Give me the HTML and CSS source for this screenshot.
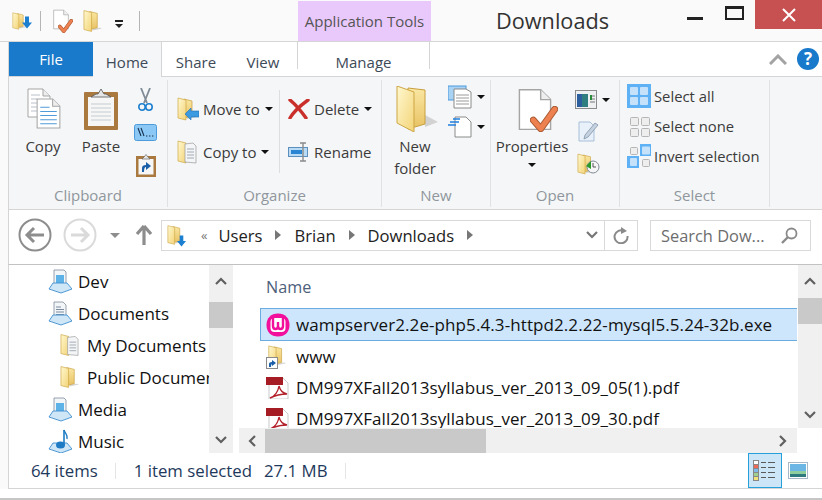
FILE: index.html
```html
<!DOCTYPE html>
<html lang="en">
<head>
  <meta charset="UTF-8">
  <meta name="viewport" content="width=device-width, initial-scale=1">
  <title>Downloads</title>
  <link rel="stylesheet" href="styles.css">
</head>
<body>

  <svg class="sprites" aria-hidden="true">
    <defs>
      <linearGradient id="fold" x1="0" y1="0" x2="1" y2="1">
        <stop offset="0" stop-color="#fff8cf"/>
        <stop offset="1" stop-color="#f3d478"/>
      </linearGradient>
      <linearGradient id="foldBack" x1="0" y1="0" x2="0" y2="1">
        <stop offset="0" stop-color="#fae7a2"/>
        <stop offset="1" stop-color="#e8c264"/>
      </linearGradient>
    </defs>
    <symbol id="folder" viewBox="0 0 20 24">
      <path d="M10 20 L18 19 L20 20 L10 22 Z" fill="#bbb" opacity=".6"/>
      <path d="M7 2 L15 4 V19 L7 21 Z" fill="url(#foldBack)" stroke="#c99f3e" stroke-width=".7"/>
      <path d="M1 1 L9 3 V23 L1 21 Z" fill="url(#fold)" stroke="#cda644" stroke-width=".7"/>
    </symbol>
    <symbol id="docfolder" viewBox="0 0 20 24">
      <path d="M1 1 L9 3 V23 L1 21 Z" fill="url(#fold)" stroke="#cda644" stroke-width=".7"/>
      <path d="M8 4 L16 3 L19 6 V23 L8 22 Z" fill="#f4f5f6" stroke="#9a9a9a" stroke-width=".7"/>
      <path d="M10 9 H17 M10 12 H17 M10 15 H17 M10 18 H17" stroke="#8c97a3" stroke-width=".8"/>
    </symbol>
    <symbol id="sheet" viewBox="0 0 24 30">
      <path d="M1 1 H16 L23 8 V29 H1 Z" fill="#fff" stroke="#a5a5a5"/>
      <path d="M16 1 V8 H23" fill="#eee" stroke="#a5a5a5"/>
    </symbol>
    <symbol id="check" viewBox="0 0 26 24">
      <path d="M3 13 L10 21 L23 3" fill="none" stroke="#a95a34" stroke-width="6.4" stroke-linecap="round" stroke-linejoin="round"/>
      <path d="M3 13 L10 21 L23 3" fill="none" stroke="#ee8150" stroke-width="4.6" stroke-linecap="round" stroke-linejoin="round"/>
    </symbol>
    <symbol id="library" viewBox="0 0 24 25">
      <path d="M6 1 H16 L18 3 V16 H6 Z" fill="#f3f6f9" stroke="#7d8b9b" stroke-width=".8"/>
      <rect x="8" y="6" width="8" height="8" fill="#5db3e8"/>
      <path d="M5 14 H19 L24 20 L13 24 L1 20 Z" fill="#cfe6f7" stroke="#3d8fd0" stroke-width=".9"/>
    </symbol>
    <symbol id="libdocs" viewBox="0 0 24 25">
      <path d="M6 1 H15 L18 4 V16 H6 Z" fill="#f3f6f9" stroke="#7d8b9b" stroke-width=".8"/>
      <path d="M8 6 H13 M8 8.500 H16 M8 11 H16 M8 13.500 H16" stroke="#6d7f92" stroke-width=".9"/>
      <path d="M5 14 H19 L24 20 L13 24 L1 20 Z" fill="#cfe6f7" stroke="#3d8fd0" stroke-width=".9"/>
    </symbol>
    <symbol id="libmusic" viewBox="0 0 24 25">
      <path d="M5 14 H19 L24 20 L13 24 L1 20 Z" fill="#cfe6f7" stroke="#3d8fd0" stroke-width=".9"/>
      <path d="M16 1 V16" stroke="#1f7cc4" stroke-width="1.600"/>
      <path d="M16 1 C17 5 20 5 19 10" fill="none" stroke="#1f7cc4" stroke-width="1.400"/>
      <ellipse cx="12.500" cy="16" rx="4.500" ry="3.600" fill="#1f7cc4"/>
    </symbol>
    <symbol id="pdf" viewBox="0 0 23 22">
      <path d="M3 1 H17 L22 6 V22 H3 Z" fill="#fff" stroke="#c9c9c9"/>
      <rect x="0" y="0" width="17" height="8" fill="#a51c24"/>
      <path d="M13 9 C12 15 9 19 4 21 C10 18 15 17 21 17 C16 16 14 13 13 9 Z" fill="none" stroke="#b3202a" stroke-width="1.4"/>
    </symbol>
  </svg>

  <div class="window">
    <div class="titlebar">
      <div class="quick">
        <svg class="q-folder"><use href="#folder"/></svg>
        <svg class="q-arrow" viewBox="0 0 10 12"><path d="M3 0 H7 V6 H10 L5 12 L0 6 H3 Z" fill="#1c7fd0"/></svg>
        <span class="q-sep"></span>
        <span class="q-doc">
          <svg class="q-sheet"><use href="#sheet"/></svg>
          <svg class="q-check"><use href="#check"/></svg>
        </span>
        <svg class="q-folder2"><use href="#folder"/></svg>
        <span class="q-more"></span>
        <span class="q-sep q-sep2"></span>
      </div>
      <div class="context">Application Tools</div>
      <div class="title">Downloads</div>
      <div class="win-btns">
        <span class="btn-min"></span>
        <span class="btn-max"></span>
        <span class="btn-close">
          <svg width="14" height="14" viewBox="0 0 14 14"><path d="M1 1 L13 13 M13 1 L1 13" stroke="#fff" stroke-width="2"/></svg>
        </span>
      </div>
    </div>

    <div class="tabs">
      <div class="tab-file">File</div>
      <div class="tab tab-home">Home</div>
      <div class="tab tab-share">Share</div>
      <div class="tab tab-view">View</div>
      <div class="tab tab-manage">Manage</div>
      <div class="tab-right">
        <svg class="collapse" width="18" height="11" viewBox="0 0 18 11"><path d="M1 10 L9 2 L17 10" fill="none" stroke="#a3a3a3" stroke-width="3"/></svg>
        <span class="help">?</span>
      </div>
    </div>

    <div class="ribbon">
      <div class="group g-clip">
        <div class="group-body">
          <div class="big big-copy">
            <span class="ico-copy">
              <svg class="copy-a" viewBox="0 0 24 30">
                <path d="M1 1 H16 L23 8 V29 H1 Z" fill="#fff" stroke="#a5a5a5"/>
                <path d="M16 1 V8 H23" fill="#eee" stroke="#a5a5a5"/>
                <path d="M4 7 H13 M4 11 H10 M4 15 H10 M4 19 H10 M4 23 H10" stroke="#b9c0c8"/>
              </svg>
              <svg class="copy-b" viewBox="0 0 24 30">
                <path d="M1 1 H16 L23 8 V29 H1 Z" fill="#fff" stroke="#a5a5a5"/>
                <path d="M16 1 V8 H23" fill="#eee" stroke="#a5a5a5"/>
                <path d="M4 9 H13 M4 13 H20 M4 17 H20 M4 21 H20 M4 25 H20" stroke="#4f9bd9" stroke-width="1"/>
              </svg>
            </span>
            <span class="big-label">Copy</span>
          </div>
          <div class="big big-paste">
            <svg width="36" height="42" viewBox="0 0 36 42">
              <rect x="1" y="4" width="34" height="38" fill="#a9793f" rx="1"/>
              <rect x="5" y="9" width="26" height="29" fill="#f6f6f6"/>
              <path d="M8 16 H28 M8 20 H28 M8 24 H28 M8 28 H28 M8 32 H28" stroke="#c6ccd2"/>
              <path d="M8 9 L13 6 H15 L18 1 L21 6 H23 L28 9 Z" fill="#e6e6e6" stroke="#555" stroke-width=".8"/>
            </svg>
            <span class="big-label">Paste</span>
          </div>
          <div class="small-col clip-small">
            <svg class="ico-cut" width="15" height="24" viewBox="0 0 15 24">
              <path d="M3 0 L9 15 M12 0 L6 15" stroke="#7f8b97" stroke-width="1.8"/>
              <circle cx="4" cy="19" r="3.2" fill="none" stroke="#1f80cf" stroke-width="1.6"/>
              <circle cx="11" cy="19" r="3.2" fill="none" stroke="#1f80cf" stroke-width="1.6"/>
            </svg>
            <svg class="ico-path" width="23" height="17" viewBox="0 0 23 17">
              <rect x=".5" y=".5" width="22" height="16" rx="2" fill="#8cc8f5" stroke="#4c9ada"/>
              <path d="M4 4 L7 12 M7 4 L10 12" stroke="#16324f" stroke-width="1.1"/>
              <path d="M12 12 H13.4 M15 12 H16.4 M18 12 H19.4" stroke="#16324f" stroke-width="1.2"/>
            </svg>
            <svg class="ico-shortcut" width="20" height="23" viewBox="0 0 20 23">
              <rect x="0" y="2" width="20" height="21" fill="#a9793f"/>
              <rect x="2.500" y="5" width="15" height="15.500" fill="#f6f6f6"/>
              <path d="M6 5 L8 3 L10 0.500 L12 3 L14 5 Z" fill="#e6e6e6" stroke="#555" stroke-width=".6"/>
              <path d="M6 18 V14 Q6 11 10 11 V8 L15 12 L10 16 V13 Q8 13 8 18 Z" fill="#1b5fa8"/>
            </svg>
          </div>
        </div>
        <div class="group-label">Clipboard</div>
      </div>

      <div class="group g-org">
        <div class="group-body org-body">
          <div class="org-col org-col1">
            <div class="org-row">
              <span class="ico-move">
                <svg class="org-folder"><use href="#folder"/></svg>
                <svg class="org-over" viewBox="0 0 14 12"><path d="M0 6 L6 0 V3 H14 V9 H6 V12 Z" fill="#3c9be0" stroke="#1e6fb5" stroke-width=".6"/></svg>
              </span>
              <span class="org-text">Move to</span><span class="caret"></span>
            </div>
            <div class="org-row">
              <span class="ico-move">
                <svg class="org-folder"><use href="#docfolder"/></svg>
              </span>
              <span class="org-text">Copy to</span><span class="caret"></span>
            </div>
          </div>
          <span class="org-sep"></span>
          <div class="org-col">
            <div class="org-row">
              <svg class="ico-del" width="22" height="20" viewBox="0 0 22 20">
                <path d="M2 1 C8 6 13 12 18 19 M20 1 C13 6 6 12 2 19" fill="none" stroke="#c9302c" stroke-width="3.400" stroke-linecap="round"/>
              </svg>
              <span class="org-text">Delete</span><span class="caret"></span>
            </div>
            <div class="org-row">
              <svg class="ico-ren" width="22" height="20" viewBox="0 0 22 20">
                <rect x=".5" y="5.500" width="19" height="9" fill="#b9dbf5" stroke="#5b8fbe"/>
                <rect x="3" y="8" width="11" height="4" fill="#2a86d2"/>
                <path d="M12 1 H18 M15 1 V19 M12 19 H18" stroke="#8b8b8b" stroke-width="1.400"/>
              </svg>
              <span class="org-text">Rename</span>
            </div>
          </div>
        </div>
        <div class="group-label">Organize</div>
      </div>

      <div class="group g-new">
        <div class="group-body">
          <div class="big big-new">
            <svg width="42" height="46" viewBox="0 0 42 46" class="ico-newfolder">
              <path d="M29 29 L42 36 L29 41 Z" fill="#c9c9c9" opacity=".8"/>
              <path d="M12 2 L29 4 V38 L12 43 Z" fill="url(#foldBack)" stroke="#c99f3e"/>
              <path d="M1 0 L18 6 V46 L1 37 Z" fill="url(#fold)" stroke="#cda644"/>
            </svg>
            <span class="big-label">New<br>folder</span>
          </div>
          <div class="small-col new-small">
            <span class="new-row">
              <svg width="24" height="24" viewBox="0 0 24 24">
                <rect x="0" y="1" width="18" height="14" fill="#a8d3f5" stroke="#4c9ada"/>
                <path d="M6 4 H18 L23 7 V23 H6 Z" fill="#fff" stroke="#8a8a8a"/>
                <path d="M8 10 H21 M8 13 H21 M8 16 H21 M8 19 H21" stroke="#9a9a9a"/>
              </svg>
              <span class="caret"></span>
            </span>
            <span class="new-row">
              <svg width="24" height="22" viewBox="0 0 24 22">
                <path d="M7 1 H18 L23 6 V21 H7 Z" fill="#fff" stroke="#8a8a8a"/>
                <path d="M5 3 H12 M2 6 H11 M0 9 H8" stroke="#1f80e0" stroke-width="1.300"/>
              </svg>
              <span class="caret"></span>
            </span>
          </div>
        </div>
        <div class="group-label">New</div>
      </div>

      <div class="group g-open">
        <div class="group-body">
          <div class="big big-prop">
            <span class="ico-prop">
              <svg class="prop-sheet"><use href="#sheet"/></svg>
              <svg class="prop-check"><use href="#check"/></svg>
            </span>
            <span class="big-label">Properties</span>
            <span class="caret caret-below"></span>
          </div>
          <div class="small-col open-small">
            <span class="new-row">
              <svg width="22" height="20" viewBox="0 0 22 20">
                <rect x=".5" y=".5" width="21" height="18" fill="#eef0f2" stroke="#8c8c8c"/>
                <rect x="2" y="4" width="11" height="13" fill="#2f7f80"/>
                <rect x="2" y="4" width="5" height="13" fill="#2d5f9e"/>
                <path d="M15 6 H20 M15 9 H20 M15 12 H20" stroke="#777"/>
                <rect x="15" y="5" width="2" height="5" fill="#2b8a3a"/>
              </svg>
              <span class="caret"></span>
            </span>
            <svg class="ico-edit" width="21" height="21" viewBox="0 0 21 21">
              <path d="M1 1 H12 L16 5 V20 H1 Z" fill="#e8f0f9" stroke="#a9bfd8"/>
              <path d="M7 14 L17 2 L20 4 L10 16 L6 18 Z" fill="#c6d2df" stroke="#7f93a8" stroke-width=".8"/>
            </svg>
            <span class="ico-history">
              <svg class="hist-folder"><use href="#folder"/></svg>
              <svg class="hist-clock" width="14" height="14" viewBox="0 0 14 14">
                <circle cx="7" cy="7" r="6" fill="#f5f5f5" stroke="#7f8b97"/>
                <path d="M7 3 V7 H10" fill="none" stroke="#555"/>
                <path d="M0 6 L5 1 L5 9 Z" fill="#2b9a2b"/>
              </svg>
            </span>
          </div>
        </div>
        <div class="group-label">Open</div>
      </div>

      <div class="group g-select">
        <div class="group-body sel-body">
          <div class="sel-row">
            <svg width="24" height="24" viewBox="0 0 24 24">
              <rect width="24" height="24" fill="#5fb1f5"/>
              <rect x="3" y="3" width="8" height="8" rx="1" fill="#c6e2fa"/><rect x="13" y="3" width="8" height="8" rx="1" fill="#c6e2fa"/>
              <rect x="3" y="13" width="8" height="8" rx="1" fill="#c6e2fa"/><rect x="13" y="13" width="8" height="8" rx="1" fill="#c6e2fa"/>
            </svg>
            <span>Select all</span>
          </div>
          <div class="sel-row">
            <svg width="24" height="24" viewBox="0 0 24 24">
              <rect x="3.500" y="3.500" width="8" height="8" rx="1" fill="#eee" stroke="#b5b5b5"/><rect x="14.500" y="3.500" width="8" height="8" rx="1" fill="#eee" stroke="#b5b5b5"/>
              <rect x="3.500" y="14.500" width="8" height="8" rx="1" fill="#eee" stroke="#b5b5b5"/><rect x="14.500" y="14.500" width="8" height="8" rx="1" fill="#eee" stroke="#b5b5b5"/>
            </svg>
            <span>Select none</span>
          </div>
          <div class="sel-row">
            <svg width="24" height="24" viewBox="0 0 24 24">
              <rect x="13" y="0" width="11" height="12" fill="#5fb1f5"/><rect x="0" y="12" width="12" height="12" fill="#5fb1f5"/>
              <rect x="3.500" y="3.500" width="7" height="7" rx="1" fill="#eee" stroke="#b5b5b5"/><rect x="15" y="2.500" width="8" height="8" rx="1" fill="#c6e2fa"/>
              <rect x="3" y="14" width="7" height="8" rx="1" fill="#c6e2fa"/><rect x="15.500" y="15.500" width="7" height="7" rx="1" fill="#eee" stroke="#b5b5b5"/>
            </svg>
            <span>Invert selection</span>
          </div>
        </div>
        <div class="group-label">Select</div>
      </div>
    </div>

    <div class="addressbar">
      <svg class="nav-back" width="34" height="34" viewBox="0 0 34 34">
        <circle cx="17" cy="17" r="15.500" fill="#fff" stroke="#8d8d8d" stroke-width="2"/>
        <path d="M26 17 H10 M16 10 L9 17 L16 24" fill="none" stroke="#8d8d8d" stroke-width="3"/>
      </svg>
      <svg class="nav-fwd" width="34" height="34" viewBox="0 0 34 34">
        <circle cx="17" cy="17" r="15.500" fill="#fff" stroke="#dadada" stroke-width="2"/>
        <path d="M8 17 H24 M18 10 L25 17 L18 24" fill="none" stroke="#dadada" stroke-width="3"/>
      </svg>
      <span class="nav-down"></span>
      <svg class="nav-up" width="16" height="20" viewBox="0 0 16 20"><path d="M8 1 L1 9 M8 1 L15 9 M8 1 V20" fill="none" stroke="#8d8d8d" stroke-width="3.200"/></svg>
      <div class="crumbs">
        <span class="crumb-ico">
          <svg class="crumb-folder"><use href="#folder"/></svg>
          <svg class="crumb-arrow" viewBox="0 0 10 12"><path d="M3 0 H7 V6 H10 L5 12 L0 6 H3 Z" fill="#1c7fd0"/></svg>
        </span>
        <span class="crumb-more">«</span>
        <span class="crumb">Users</span><span class="crumb-sep"></span>
        <span class="crumb">Brian</span><span class="crumb-sep"></span>
        <span class="crumb">Downloads</span><span class="crumb-sep"></span>
        <svg class="crumb-drop" width="12" height="8" viewBox="0 0 12 8"><path d="M1 1 L6 6 L11 1" fill="none" stroke="#777" stroke-width="2.200"/></svg>
        <span class="crumb-refresh">
          <svg width="16" height="17" viewBox="0 0 16 17"><path d="M11 4 A6.500 6.500 0 1 0 14.500 9" fill="none" stroke="#8a8a8a" stroke-width="2"/><path d="M8 0 L14 4 L8 7 Z" fill="#8a8a8a"/></svg>
        </span>
      </div>
      <div class="search">
        <span>Search Dow...</span>
        <svg width="17" height="17" viewBox="0 0 17 17"><circle cx="10.500" cy="6.500" r="5" fill="none" stroke="#8a8a8a" stroke-width="1.800"/><path d="M7 10 L1 16" stroke="#8a8a8a" stroke-width="2.400"/></svg>
      </div>
    </div>

    <div class="panes">
      <div class="navpane">
        <div class="nav-row"><svg class="nav-ico"><use href="#library"/></svg><span>Dev</span></div>
        <div class="nav-row"><svg class="nav-ico"><use href="#libdocs"/></svg><span>Documents</span></div>
        <div class="nav-row nav-sub"><svg class="sub-ico"><use href="#docfolder"/></svg><span>My Documents</span></div>
        <div class="nav-row nav-sub"><svg class="sub-ico"><use href="#folder"/></svg><span>Public Documents</span></div>
        <div class="nav-row"><svg class="nav-ico"><use href="#library"/></svg><span>Media</span></div>
        <div class="nav-row"><svg class="nav-ico"><use href="#libmusic"/></svg><span>Music</span></div>
      </div>
      <div class="vscroll vscroll-nav">
        <svg class="sb-arrow" viewBox="0 0 12 8"><path d="M1 7 L6 2 L11 7" fill="none" stroke="#606060" stroke-width="2.200"/></svg>
        <span class="thumb thumb-nav"></span>
        <svg class="sb-arrow sb-end" viewBox="0 0 12 8"><path d="M1 1 L6 6 L11 1" fill="none" stroke="#606060" stroke-width="2.200"/></svg>
      </div>
      <div class="filepane">
        <div class="filearea">
          <div class="filelist">
            <div class="col-head">Name</div>
            <div class="file selected">
              <svg class="wamp" width="24" height="24" viewBox="0 0 24 24">
                <path d="M12 0.500 C19 0.500 23.500 5 23.500 12 C23.500 19 19 23.500 12 23.500 C5 23.500 0.500 19 0.500 12 C0.500 5 5 0.500 12 0.500 Z" fill="#f20f9c"/>
                <rect x="4.500" y="5" width="15" height="14" rx="4" fill="#fff"/>
                <path d="M7 5 V13 Q7 16 9.500 16 Q12 16 12 13 V9 M12 13 Q12 16 14.500 16 Q17 16 17 13 V5" fill="none" stroke="#f20f9c" stroke-width="2.400"/>
              </svg>
              <span>wampserver2.2e-php5.4.3-httpd2.2.22-mysql5.5.24-32b.exe</span>
            </div>
            <div class="file">
              <span class="file-ico">
                <svg class="www-folder"><use href="#folder"/></svg>
                <svg class="www-link" viewBox="0 0 12 12"><rect x=".5" y=".5" width="11" height="11" fill="#fff" stroke="#8a8a8a"/><path d="M3 10 V7 Q3 5 6 5 V3 L10 6 L6 9 V7 Q5 7 5 10 Z" fill="#1b5fa8"/></svg>
              </span>
              <span>www</span>
            </div>
            <div class="file"><svg class="file-ico pdf-ico"><use href="#pdf"/></svg><span>DM997XFall2013syllabus_ver_2013_09_05(1).pdf</span></div>
            <div class="file"><svg class="file-ico pdf-ico"><use href="#pdf"/></svg><span>DM997XFall2013syllabus_ver_2013_09_30.pdf</span></div>
          </div>
          <div class="hscroll">
            <svg class="hb-arrow" viewBox="0 0 8 12"><path d="M7 1 L2 6 L7 11" fill="none" stroke="#606060" stroke-width="2.200"/></svg>
            <span class="thumb-h"></span>
            <svg class="hb-arrow hb-end" viewBox="0 0 8 12"><path d="M1 1 L6 6 L1 11" fill="none" stroke="#606060" stroke-width="2.200"/></svg>
          </div>
        </div>
        <div class="vscroll vscroll-file">
          <svg class="sb-arrow" viewBox="0 0 12 8"><path d="M1 7 L6 2 L11 7" fill="none" stroke="#606060" stroke-width="2.200"/></svg>
          <span class="thumb thumb-file"></span>
          <svg class="sb-arrow sb-end" viewBox="0 0 12 8"><path d="M1 1 L6 6 L11 1" fill="none" stroke="#606060" stroke-width="2.200"/></svg>
        </div>
      </div>
    </div>

    <div class="statusbar">
      <span class="st-items">64 items</span>
      <span class="st-sep"></span>
      <span class="st-sel">1 item selected</span>
      <span class="st-size">27.1 MB</span>
      <span class="st-sep"></span>
      <span class="view-details">
        <svg width="24" height="22" viewBox="0 0 24 22">
          <rect x=".5" y=".5" width="5" height="4" fill="#fff" stroke="#888"/><rect x=".5" y="4.500" width="5" height="4" fill="#f06a5a" stroke="#888"/>
          <rect x=".5" y="8.500" width="5" height="4" fill="#7fb8ea" stroke="#888"/><rect x=".5" y="12.500" width="5" height="4" fill="#9fd08f" stroke="#888"/>
          <rect x=".5" y="16.500" width="5" height="4" fill="#f2e27a" stroke="#888"/>
          <path d="M8 2.500 H13 M15 2.500 H22 M8 7.500 H13 M15 7.500 H22 M8 12.500 H13 M15 12.500 H22 M8 17.500 H13 M15 17.500 H22" stroke="#5a5a5a"/>
        </svg>
      </span>
      <svg class="view-large" width="20" height="17" viewBox="0 0 20 17">
        <rect x=".5" y=".5" width="19" height="16" fill="#fff" stroke="#a9b8c6"/>
        <rect x="2" y="2" width="16" height="7" fill="#6cb6e6"/>
        <rect x="2" y="9" width="16" height="4" fill="#8ecf9d"/>
        <rect x="2" y="12" width="16" height="3" fill="#2f7a7d"/>
      </svg>
    </div>
    <div class="bottom-gap"></div>
  </div>

</body>
</html>
```

FILE: styles.css
```css
html, body {
  margin: 0;
  padding: 0;
}
body {
  width: 822px;
  height: 500px;
  overflow: hidden;
  background: #fff;
  font-family: "Open Sans", "Noto Sans", sans-serif;
  font-size: 15px;
  color: #3b3b3b;
}
svg {
  display: block;
  flex: none;
}
.sprites {
  width: 0;
  height: 0;
  position: absolute;
}
.window {
  background: #fafafa;
  height: 498px;
  border-bottom: 2px solid #c6c6c6;
}

/* title bar */
.titlebar {
  height: 41px;
  display: flex;
  border-bottom: 1px solid #d5d5d5;
}
.quick {
  width: 298px;
  display: flex;
  align-items: center;
  padding-left: 12px;
  box-sizing: border-box;
}
.q-folder {
  width: 15px;
  height: 18px;
}
.q-arrow {
  width: 10px;
  height: 13px;
  margin: 4px 0 0 -5px;
}
.q-sep {
  width: 1px;
  height: 20px;
  background: #b5b5b5;
  margin: 0 12px 0 8px;
}
.q-sep2 {
  margin: 0 0 0 16px;
}
.q-doc {
  width: 22px;
  height: 24px;
  position: relative;
}
.q-sheet {
  width: 16px;
  height: 21px;
}
.q-check {
  position: absolute;
  left: 5px;
  top: 10px;
  width: 15px;
  height: 14px;
}
.q-folder2 {
  width: 19px;
  height: 24px;
  margin-left: 8px;
}
.q-more {
  width: 8px;
  height: 0;
  margin-left: 13px;
  border-top: 2px solid #222;
  position: relative;
}
.q-more::after {
  content: "";
  position: absolute;
  left: 0;
  top: 2px;
  border: 4px solid transparent;
  border-top: 4px solid #222;
}
.context {
  width: 133px;
  height: 40px;
  margin-top: 1px;
  background: #e9c9fb;
  text-align: center;
  line-height: 41px;
  font-size: 15px;
  color: #555;
}
.title {
  margin-left: 65px;
  font-size: 21.7px;
  line-height: 41px;
  color: #333;
}
.win-btns {
  margin-left: auto;
  display: flex;
  align-items: flex-start;
}
.btn-min {
  width: 16px;
  height: 3px;
  background: #222;
  margin: 17px 22px 0 0;
}
.btn-max {
  width: 15px;
  height: 9px;
  border: 2px solid #222;
  border-top-width: 3px;
  margin: 6px 11px 0 0;
}
.btn-close {
  width: 67px;
  height: 29px;
  background: #c75050;
  display: flex;
  align-items: center;
  justify-content: center;
}

/* tabs */
.tabs {
  height: 34px;
  margin-left: 8px;
  display: flex;
  background: #fff;
  border-left: 1px solid #d5d5d5;
  font-size: 15px;
  color: #3d4a57;
}
.tab-file {
  width: 84px;
  height: 34px;
  background: #1979ca;
  color: #fff;
  text-align: center;
  line-height: 34px;
}
.tab {
  line-height: 41px;
}
.tab-home {
  width: 69px;
  height: 35px;
  box-sizing: border-box;
  text-align: center;
  background: #f5f6f7;
  border-right: 1px solid #d5d5d5;
  position: relative;
}
.tab-share {
  width: 68px;
  text-align: center;
}
.tab-view {
  width: 40px;
  text-align: center;
  margin-left: 13px;
}
.tab-manage {
  width: 133px;
  height: 27px;
  margin-left: 14px;
  text-align: center;
  box-sizing: border-box;
  border-left: 1px solid #d5d5d5;
  border-right: 1px solid #d5d5d5;
}
.tab-right {
  margin-left: auto;
  display: flex;
  align-items: center;
  padding-right: 3px;
}
.collapse {
  margin-right: 10px;
}
.help {
  width: 22px;
  height: 22px;
  border-radius: 50%;
  background: #1979ca;
  color: #fff;
  font-weight: 700;
  font-size: 17px;
  line-height: 22px;
  text-align: center;
}

/* ribbon */
.ribbon {
  height: 129px;
  margin-left: 8px;
  padding-top: 3px;
  display: flex;
  background: #f5f6f7;
  border-top: 1px solid #d5d5d5;
  border-left: 1px solid #d5d5d5;
  border-bottom: 1px solid #d5d5d5;
  font-size: 15px;
  color: #3b3b3b;
}
.group {
  box-sizing: border-box;
  height: 127px;
  display: flex;
  flex-direction: column;
  border-right: 1px solid #dfe1e3;
}
.group-body {
  height: 105px;
  display: flex;
}
.group-label {
  text-align: center;
  line-height: 20px;
  color: #8f969d;
}
.g-clip { width: 159px; }
.g-clip .group-body { padding-left: 5px; }
.g-org { width: 214px; }
.org-body { padding-left: 9px; }
.g-new { width: 109px; }
.g-open { width: 129px; }
.g-select { width: 150px; }
.big {
  display: flex;
  flex-direction: column;
  align-items: center;
  padding-top: 8px;
}
.big-label {
  line-height: 22px;
  text-align: center;
}
.big-copy, .big-paste {
  width: 58px;
}
.ico-copy {
  width: 36px;
  height: 41px;
  position: relative;
  margin-bottom: 6px;
}
.copy-a {
  width: 28px;
  height: 30px;
}
.copy-b {
  position: absolute;
  left: 11px;
  top: 10px;
  width: 25px;
  height: 31px;
}
.big-paste svg {
  margin-bottom: 5px;
}
.small-col {
  display: flex;
  flex-direction: column;
  align-items: center;
}
.clip-small {
  width: 23px;
  margin-left: 4px;
  padding-top: 8px;
}
.ico-path {
  margin-top: 12px;
}
.ico-shortcut {
  margin-top: 13px;
}
.org-col {
  padding-top: 7px;
}
.org-col1 {
  width: 102px;
}
.org-row {
  height: 43px;
  display: flex;
  align-items: center;
}
.ico-move {
  width: 22px;
  height: 24px;
  position: relative;
}
.org-folder {
  width: 20px;
  height: 24px;
}
.org-over {
  position: absolute;
  left: 8px;
  top: 11px;
  width: 14px;
  height: 12px;
}
.org-text {
  margin-left: 4px;
}
.caret {
  width: 0;
  height: 0;
  border: 4px solid transparent;
  border-top: 4px solid #111;
  border-bottom: 0;
  margin-left: 5px;
  flex: none;
}
.org-sep {
  width: 1px;
  height: 83px;
  background: #dcdee0;
  margin: 10px 8px 0 0;
}
.big-new {
  width: 66px;
  padding-top: 6px;
}
.ico-newfolder {
  margin: 0 0 3px 3px;
}
.new-small {
  padding-top: 5px;
  align-items: flex-start;
  gap: 7px;
}
.new-row {
  display: flex;
  align-items: center;
}
.big-prop {
  width: 76px;
  margin-left: 3px;
  padding-top: 8px;
}
.ico-prop {
  width: 44px;
  height: 46px;
  position: relative;
  margin-bottom: 1px;
  margin-left: 15px;
}
.prop-sheet {
  width: 34px;
  height: 43px;
}
.prop-check {
  position: absolute;
  left: 12px;
  top: 18px;
  width: 28px;
  height: 26px;
}
.caret-below {
  margin: 6px 0 0;
}
.open-small {
  margin-left: 5px;
  padding-top: 10px;
  align-items: flex-start;
}
.ico-edit {
  margin: 11px 0 0 3px;
}
.ico-history {
  width: 23px;
  height: 24px;
  position: relative;
  margin: 10px 0 0 2px;
}
.hist-folder {
  width: 18px;
  height: 24px;
}
.hist-clock {
  position: absolute;
  left: 9px;
  top: 8px;
}
.sel-body {
  flex-direction: column;
  padding: 1px 0 0 7px;
  height: 104px;
  font-size: 14.8px;
}
.sel-row {
  height: 30px;
  display: flex;
  align-items: center;
  gap: 3px;
  white-space: nowrap;
}

/* address bar */
.addressbar {
  height: 55px;
  margin-left: 8px;
  box-sizing: border-box;
  display: flex;
  align-items: center;
  background: #fff;
  border-left: 1px solid #d5d5d5;
  border-bottom: 1px solid #c2c2c2;
  padding: 0 0 4px 9px;
}
.nav-fwd {
  margin-left: 11px;
}
.nav-down {
  width: 0;
  height: 0;
  border: 5px solid transparent;
  border-top: 5px solid #8d8d8d;
  border-bottom: 0;
  margin-left: 13px;
}
.nav-up {
  margin-left: 16px;
}
.crumbs {
  width: 477px;
  height: 31px;
  box-sizing: border-box;
  margin-left: 9px;
  border: 1px solid #d9d9d9;
  display: flex;
  align-items: center;
  font-size: 16.6px;
  color: #222;
}
.crumb-ico {
  width: 20px;
  height: 24px;
  margin-left: 5px;
  position: relative;
}
.crumb-folder {
  width: 17px;
  height: 24px;
}
.crumb-arrow {
  position: absolute;
  left: 10px;
  top: 12px;
  width: 9px;
  height: 12px;
}
.crumb-more {
  margin: 0 11px 0 14px;
  color: #777;
  font-size: 13px;
}
.crumb-sep {
  width: 0;
  height: 0;
  border: 5px solid transparent;
  border-left: 6px solid #777;
  border-right: 0;
  margin: 0 13px 0 13px;
}
.crumb-drop {
  margin-left: auto;
  margin-right: 6px;
}
.crumb-refresh {
  width: 33px;
  height: 29px;
  box-sizing: border-box;
  border-left: 1px solid #d9d9d9;
  display: flex;
  align-items: center;
  justify-content: center;
}
.search {
  width: 161px;
  height: 31px;
  box-sizing: border-box;
  margin-left: 12px;
  border: 1px solid #d9d9d9;
  padding: 0 12px 0 10px;
  display: flex;
  align-items: center;
  justify-content: space-between;
  color: #6d6d6d;
  font-size: 16.4px;
}

/* panes */
.panes {
  height: 188px;
  margin-left: 8px;
  display: flex;
  background: #fff;
  border-left: 1px solid #d5d5d5;
  color: #111;
  font-size: 17px;
}
.navpane {
  width: 200px;
  overflow: hidden;
  white-space: nowrap;
}
.nav-row {
  height: 32px;
  display: flex;
  align-items: center;
  padding-left: 39px;
}
.nav-ico {
  width: 24px;
  height: 25px;
  margin-right: 6px;
}
.nav-sub {
  padding-left: 51px;
}
.sub-ico {
  width: 19px;
  height: 24px;
  margin-right: 8px;
}
.vscroll {
  width: 24px;
  background: #f0f0f0;
  display: flex;
  flex-direction: column;
  align-items: center;
  flex: none;
}
.sb-arrow {
  width: 12px;
  height: 8px;
  margin-top: 12px;
}
.sb-end {
  margin-top: auto;
  margin-bottom: 9px;
}
.thumb {
  width: 24px;
  height: 26px;
  background: #c9c9c9;
  flex: none;
}
.thumb-nav {
  margin-top: 17px;
}
.thumb-file {
  margin-top: 13px;
}
.filepane {
  flex: 1;
  display: flex;
  margin-left: 6px;
  min-width: 0;
}
.filearea {
  flex: 1;
  min-width: 0;
  display: flex;
  flex-direction: column;
}
.filelist {
  height: 163px;
  overflow: hidden;
  white-space: nowrap;
  padding-left: 21px;
}
.col-head {
  height: 43px;
  line-height: 44px;
  padding-left: 6px;
  color: #4c607a;
  font-size: 16.2px;
}
.file {
  height: 31px;
  box-sizing: border-box;
  display: flex;
  align-items: center;
  padding-left: 6px;
  margin-right: 1px;
  letter-spacing: .09px;
}
.selected {
  height: 33px;
  background: #cde6fc;
  border: 1px solid #6aacdf;
  border-right: 0;
  padding-left: 5px;
}
.wamp {
  margin-right: 6px;
}
.file-ico {
  width: 24px;
  height: 24px;
  margin-right: 6px;
  position: relative;
  flex: none;
}
.www-folder {
  margin-left: 1px;
  width: 20px;
  height: 22px;
}
.www-link {
  position: absolute;
  left: 0;
  top: 12px;
  width: 12px;
  height: 12px;
}
.pdf-ico {
  width: 23px;
  height: 22px;
  margin-right: 7px;
}
.hscroll {
  height: 25px;
  background: #f0f0f0;
  display: flex;
  align-items: center;
  margin-right: 1px;
}
.hb-arrow {
  width: 8px;
  height: 12px;
  margin-left: 9px;
  flex: none;
}
.hb-end {
  margin-left: auto;
  margin-right: 10px;
}
.thumb-h {
  width: 221px;
  height: 24px;
  background: #c9c9c9;
  margin-left: 9px;
}
.vscroll-file {
  height: 163px;
}

/* status bar */
.statusbar {
  height: 35px;
  margin-left: 8px;
  display: flex;
  align-items: center;
  background: #fff;
  border-left: 1px solid #d5d5d5;
  border-bottom: 1px solid #d5d5d5;
  padding-left: 22px;
  color: #1e395b;
  font-size: 16.8px;
}
.st-sep {
  width: 1px;
  height: 16px;
  background: #e5e5e5;
  margin: 0 18px 0 17px;
}
.st-size {
  margin-left: 12px;
}
.view-details {
  width: 34px;
  height: 35px;
  box-sizing: border-box;
  margin-left: auto;
  background: #cde6f7;
  border: 1px solid #26a0da;
  display: flex;
  align-items: center;
  justify-content: center;
}
.view-large {
  margin: 0 14px 0 6px;
}
.bottom-gap {
  height: 9px;
  background: #fff;
}
```
